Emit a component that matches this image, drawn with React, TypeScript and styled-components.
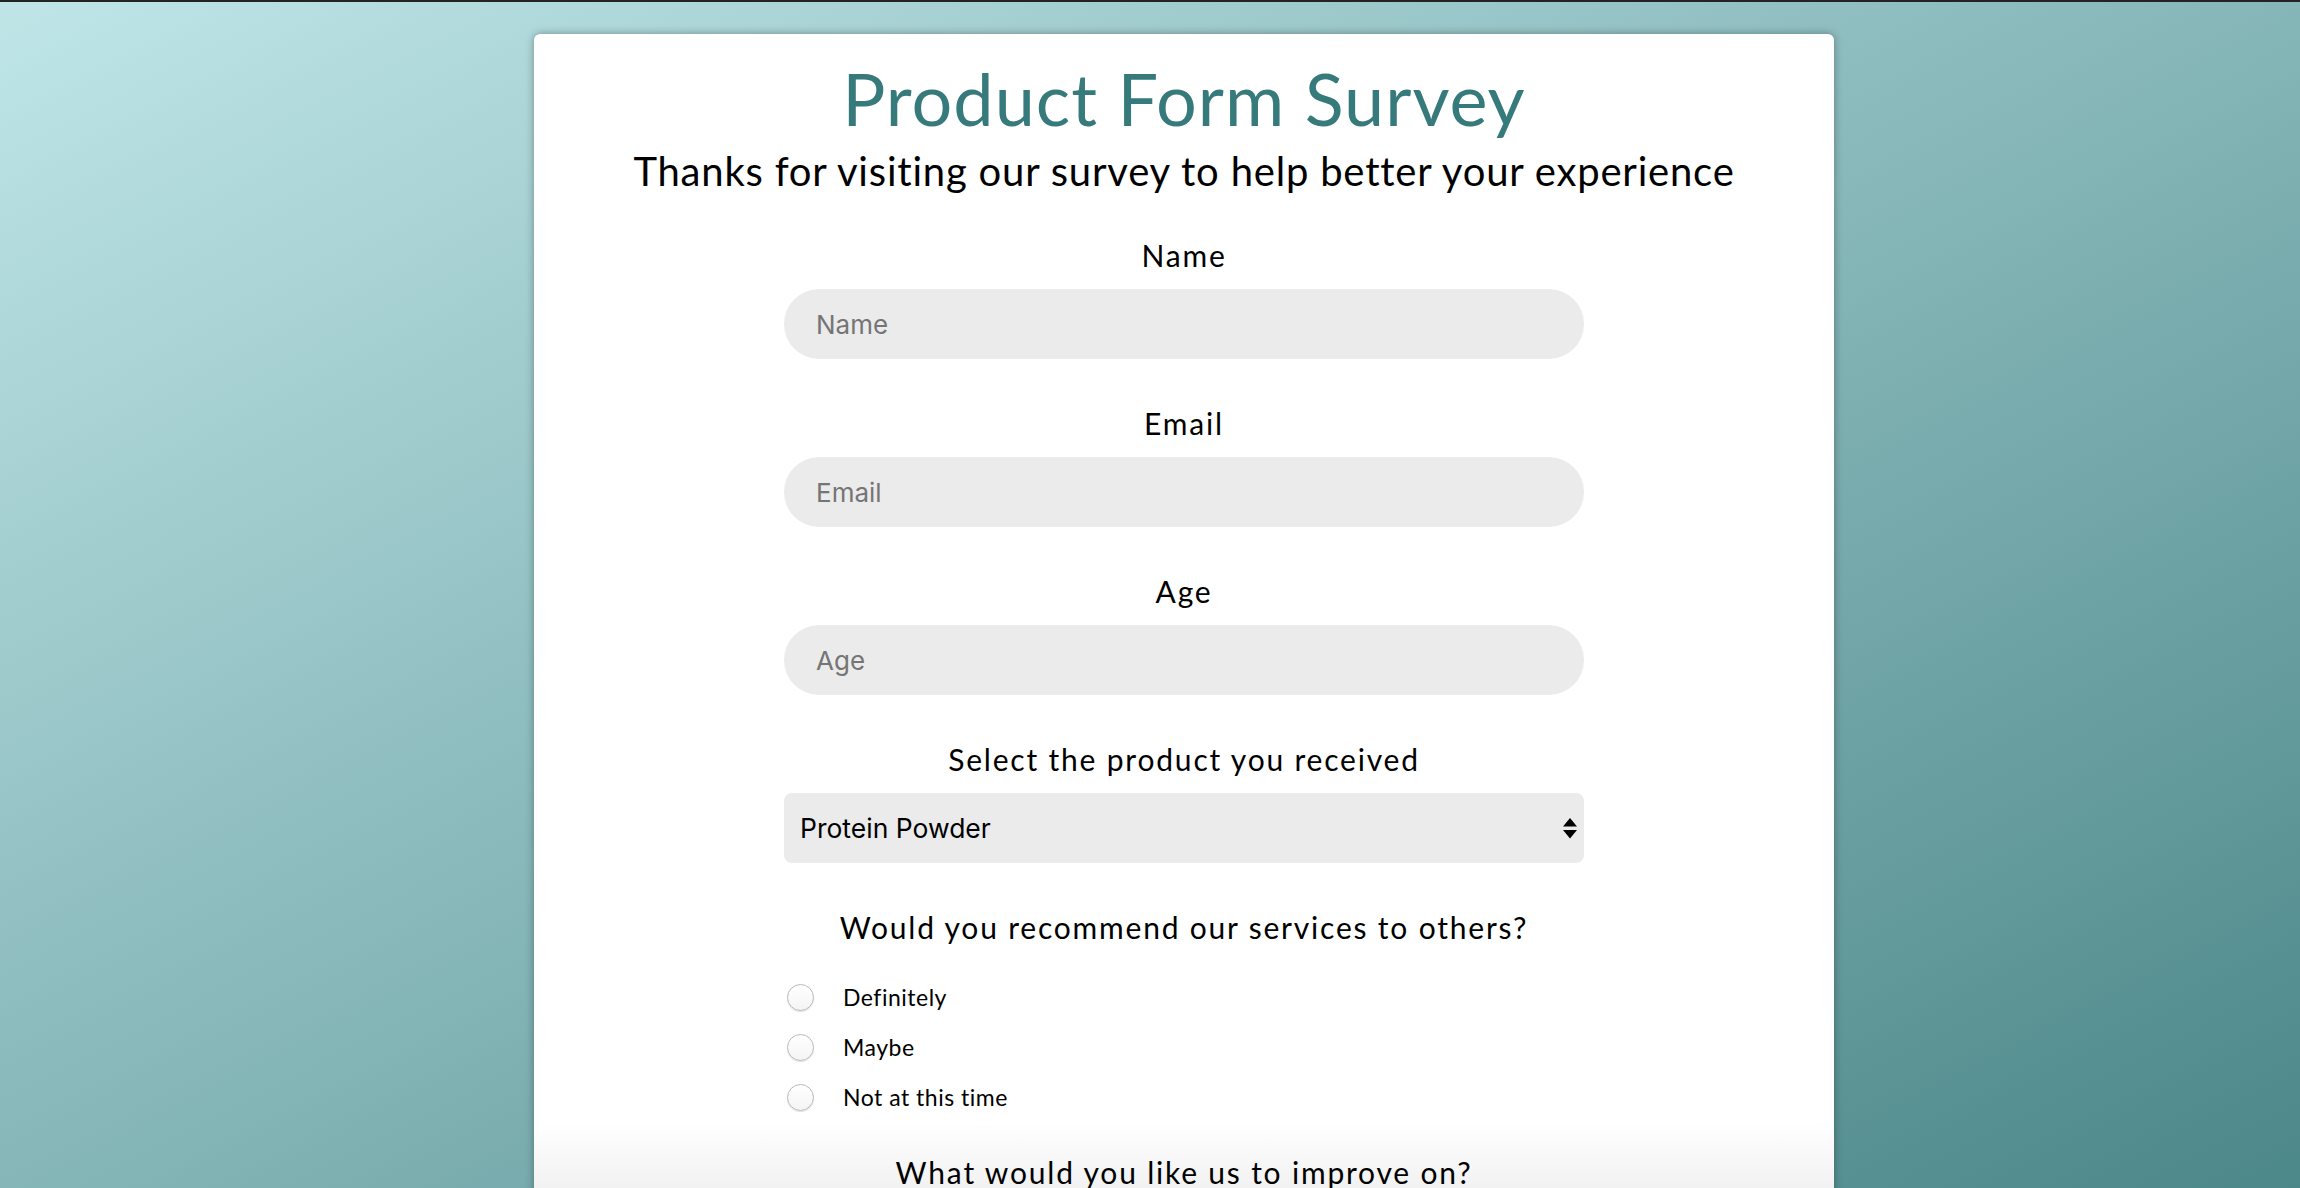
import styled, { createGlobalStyle } from "styled-components";

const GlobalStyle = createGlobalStyle`
  html {
    scrollbar-width: none;
  }
  body {
    margin: 0;
    background: linear-gradient(to bottom right, #bfe5e7, #4c8789) fixed;
    font-family: "Lato", "Open Sans", sans-serif;
  }
  body::-webkit-scrollbar {
    display: none;
  }
`;

const Page = styled.div`
  display: flex;
  justify-content: center;
  min-height: 100vh;
  box-sizing: border-box;
  border-top: 2px solid #232323;
  padding: 32px 0 0 68px;
`;

const Card = styled.main`
  width: 1300px;
  background: #fff;
  border-radius: 6px 6px 0 0;
  box-shadow: 0 0 9px rgba(0, 0, 0, 0.35);
  padding-top: 28px;
  text-align: center;
`;

const Title = styled.h1`
  margin: 0;
  font-size: 72px;
  line-height: 1;
  font-weight: 400;
  letter-spacing: 1px;
  color: #367a7c;
`;

const Subtitle = styled.p`
  margin: 17px 0 0;
  font-size: 40px;
  line-height: 1;
  letter-spacing: 0.8px;
  color: #000;
`;

const Form = styled.form`
  display: flex;
  flex-direction: column;
  align-items: center;
`;

const Field = styled.div`
  display: flex;
  flex-direction: column;
  width: 800px;
  margin-top: 49px;
`;

const Label = styled.label`
  display: block;
  margin: 0 0 19px;
  font-size: 30px;
  line-height: 1;
  letter-spacing: 1.8px;
  color: #000;
`;

const TextInput = styled.input`
  box-sizing: border-box;
  width: 100%;
  height: 70px;
  border: none;
  border-radius: 35px;
  background: #ebebeb;
  padding: 0 32px;
  font-family: "Inter", "Liberation Sans", sans-serif;
  font-size: 26px;
  color: #000;
  outline: none;

  &::placeholder {
    color: #757575;
  }
`;

const SelectWrap = styled.div`
  position: relative;
  width: 100%;
`;

const Select = styled.select`
  appearance: none;
  box-sizing: border-box;
  width: 100%;
  height: 70px;
  border: none;
  border-radius: 8px;
  background: #ebebeb;
  padding: 0 40px 0 16px;
  font-family: "Inter", "Liberation Sans", sans-serif;
  font-size: 26.5px;
  color: #000;
  outline: none;
`;

const Arrows = styled.svg`
  position: absolute;
  right: 7px;
  top: 25px;
  pointer-events: none;
`;

const RadioList = styled.div`
  display: flex;
  flex-direction: column;
  margin-top: 11px;
`;

const RadioRow = styled.label`
  display: flex;
  align-items: center;
  height: 50px;
  font-size: 23px;
  letter-spacing: 0.5px;
  color: #000;
  text-align: left;
`;

const Radio = styled.input`
  appearance: none;
  box-sizing: border-box;
  width: 27px;
  height: 27px;
  margin: 0 29px 0 3px;
  border-radius: 50%;
  border: 1px solid #b9b9b9;
  background: linear-gradient(#ffffff, #f4f4f4);
  box-shadow: 0 1px 1px rgba(0, 0, 0, 0.12);
`;

const ImproveSection = styled.section`
  align-self: stretch;
  padding: 35px 0 60px;
  background: linear-gradient(to bottom, #ffffff, #ebebeb 100px);
  display: flex;
  flex-direction: column;
  align-items: center;
`;

const CheckRow = styled(RadioRow)`
  width: 800px;
`;

const Check = styled(Radio)`
  border-radius: 5px;
`;

const App = () => {
  return (
    <>
      <GlobalStyle />
      <Page>
        <Card>
          <Title>Product Form Survey</Title>
          <Subtitle>Thanks for visiting our survey to help better your experience</Subtitle>
          <Form onSubmit={(e) => e.preventDefault()}>
            <Field>
              <Label htmlFor="name">Name</Label>
              <TextInput id="name" type="text" placeholder="Name" />
            </Field>
            <Field>
              <Label htmlFor="email">Email</Label>
              <TextInput id="email" type="email" placeholder="Email" />
            </Field>
            <Field>
              <Label htmlFor="age">Age</Label>
              <TextInput id="age" type="number" placeholder="Age" />
            </Field>
            <Field>
              <Label htmlFor="product">Select the product you received</Label>
              <SelectWrap>
                <Select id="product" defaultValue="protein">
                  <option value="protein">Protein Powder</option>
                  <option value="bars">Protein Bars</option>
                  <option value="shaker">Shaker Bottle</option>
                </Select>
                <Arrows width="14" height="21" viewBox="0 0 14 21">
                  <polygon points="7,0 14,8.5 0,8.5" fill="#000" />
                  <polygon points="0,12 14,12 7,20.5" fill="#000" />
                </Arrows>
              </SelectWrap>
            </Field>
            <Field>
              <Label as="p">Would you recommend our services to others?</Label>
              <RadioList>
                <RadioRow>
                  <Radio type="radio" name="recommend" value="definitely" />
                  Definitely
                </RadioRow>
                <RadioRow>
                  <Radio type="radio" name="recommend" value="maybe" />
                  Maybe
                </RadioRow>
                <RadioRow>
                  <Radio type="radio" name="recommend" value="no" />
                  Not at this time
                </RadioRow>
              </RadioList>
            </Field>
            <ImproveSection>
              <Label as="p">What would you like us to improve on?</Label>
              <CheckRow>
                <Check type="checkbox" value="taste" />
                Taste
              </CheckRow>
              <CheckRow>
                <Check type="checkbox" value="price" />
                Price
              </CheckRow>
              <CheckRow>
                <Check type="checkbox" value="shipping" />
                Shipping
              </CheckRow>
            </ImproveSection>
          </Form>
        </Card>
      </Page>
    </>
  );
};

export default App;
